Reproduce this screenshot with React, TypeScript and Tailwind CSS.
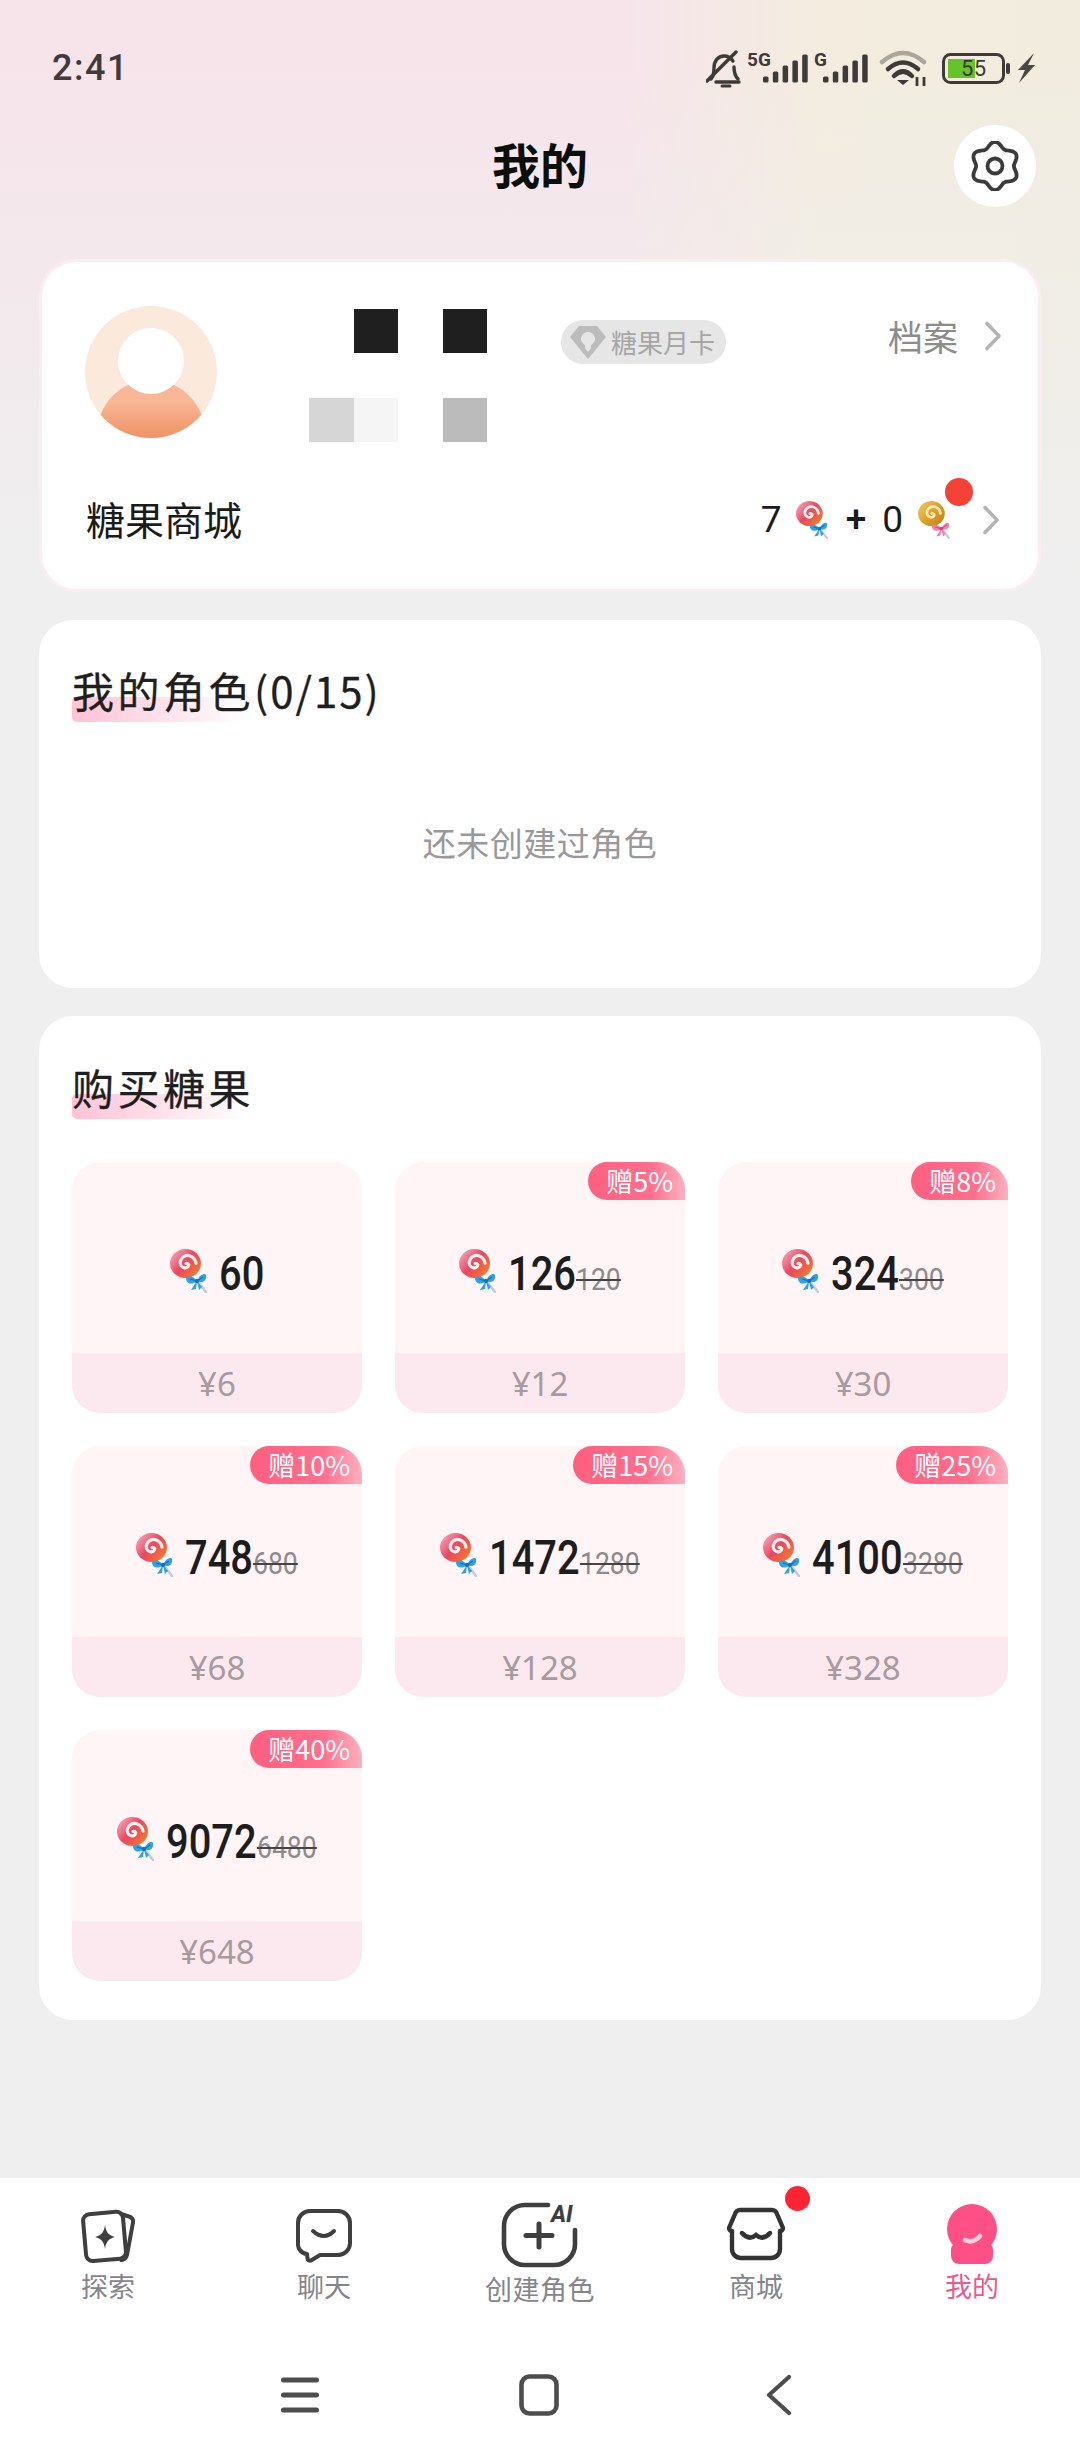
import React from 'react';

const cjk = "font-['Noto_Sans_CJK_SC','Noto_Sans',sans-serif]";
const roboto = "font-['Roboto',sans-serif]";

// scalloped outline for the settings gear
const gearPath = (() => {
    const pts: string[] = [];
    for (let i = 0; i < 120; i++) {
        const t = (i / 120) * Math.PI * 2;
        const r = 21.5 + 2.6 * Math.cos(6 * (t - Math.PI / 2));
        pts.push(`${(24 + r * Math.cos(t)).toFixed(2)} ${(25 + r * Math.sin(t)).toFixed(2)}`);
    }
    return 'M' + pts.join('L') + 'Z';
})();

const Chevron = () => (
    <svg width="18" height="30" viewBox="0 0 18 30" fill="none">
        <path d="M3 2.5 15 15 3 27.5" stroke="#b4b4b4" strokeWidth="3.6" strokeLinecap="round" strokeLinejoin="round" />
    </svg>
);

const Candy = ({ id, gold = false, w = 37, h = 44 }: { id: string; gold?: boolean; w?: number; h?: number }) => {
    const bow = gold ? '#f57fab' : '#2ba3ea';
    const bowDark = gold ? '#d8457e' : '#0f74c2';
    return (
        <svg width={w} height={h} viewBox="0 0 37 44" fill="none" className="shrink-0">
            <defs>
                <linearGradient id={id} x1="0.05" y1="0.1" x2="0.95" y2="0.8">
                    <stop offset="0" stopColor={gold ? '#efc560' : '#f9a6b8'} />
                    <stop offset="0.5" stopColor={gold ? '#dfa32b' : '#ea4660'} />
                    <stop offset="1" stopColor={gold ? '#c5851a' : '#f4792b'} />
                </linearGradient>
            </defs>
            <path d="M29 34 36 43" stroke="#c4c9e8" strokeWidth="2.6" strokeLinecap="round" />
            <ellipse cx="15.5" cy="14.500" rx="15.500" ry="14.500" fill={`url(#${id})`} />
            <path
                d="M16 14.500a2.200 2.200 0 0 1 2.800 1.500 3.800 3.800 0 0 1-4.600 2.800 5.600 5.600 0 0 1-3.800-6.800 7.600 7.600 0 0 1 9.200-5.300 9.500 9.500 0 0 1 6.400 7.500"
                stroke={gold ? '#fbe8b0' : '#fff0ec'}
                strokeWidth="3.200"
                strokeLinecap="round"
            />
            <path d="M27 32C23 26 18 27 16 29 16 34 21 37 27 32Z" fill={bow} />
            <path d="M27 32C30 25 35 24 36 26 37 31 33 35 27 32Z" fill={bow} />
            <path d="M27 32 21 41 26 40Z" fill={bow} />
            <path d="M27 32 29 41 32 38Z" fill={bow} />
            <path d="M20 30 27 32M33 28 27 32" stroke={bowDark} strokeWidth="1.200" />
            <circle cx="27" cy="32" r="2.200" fill={bowDark} />
        </svg>
    );
};

const StatusIcons = () => {
    const bars = (x: number) =>
        [6, 11, 17, 22, 28].map((bh, i) => (
            <rect key={i} x={x + i * 9.8} y={32.5 - bh} width="5.500" height={bh} rx="1.500" fill="#3d3a38" />
        ));
    return (
        <svg width="330" height="46" viewBox="0 -6 330 46" fill="none" className="-mt-[6px]">
            <path
                d="M5 29c3-3 3-6 3-11 0-7 4-12 10-12 4 0 7 2 9 5M28 17c0 5 1 9 4 12"
                stroke="#3d3a38"
                strokeWidth="3.400"
                strokeLinecap="round"
            />
            <path d="M1 31 30 2M10 32H33" stroke="#3d3a38" strokeWidth="3.400" strokeLinecap="round" />
            <path d="M16 36h8" stroke="#3d3a38" strokeWidth="3" strokeLinecap="round" />
            <text x="41" y="15.500" fontSize="19" fontWeight="700" fill="#3d3a38" fontFamily="Roboto, sans-serif">5G</text>
            {bars(57)}
            <text x="108" y="15.500" fontSize="19" fontWeight="700" fill="#3d3a38" fontFamily="Roboto, sans-serif">G</text>
            {bars(117)}
            <path d="M176 12Q197-6 218 12" stroke="#aaa69c" strokeWidth="4.500" strokeLinecap="round" />
            <path d="M182 19Q197 6 212 19M188 26Q197 17 206 26" stroke="#3d3a38" strokeWidth="4.500" strokeLinecap="round" />
            <path d="M191 30h12l-6 5Z" fill="#3d3a38" />
            <path d="M211 27v9M218 27v9" stroke="#3d3a38" strokeWidth="2.800" />
            <rect x="237.500" y="4.500" width="60" height="28" rx="7" stroke="#3d3a38" strokeWidth="3" />
            <rect x="242" y="9" width="27" height="19" fill="#66c32a" />
            <text x="255" y="26" fontSize="22" letterSpacing="0.5" fill="#3a3a36" fontFamily="Roboto, sans-serif">55</text>
            <rect x="300" y="13" width="4" height="11" rx="2" fill="#3d3a38" />
            <path d="M328 3 312 20h7l-6 13 16-18h-7Z" fill="#4a4743" />
        </svg>
    );
};

const ExploreIcon = () => (
    <svg width="55" height="56" viewBox="0 0 55 56" fill="none">
        <path d="M40 6 48 8.500a5 5 0 0 1 4 6L46 47a6 6 0 0 1-7 5" stroke="#3f3f3f" strokeWidth="4" strokeLinejoin="round" />
        <rect x="3.500" y="5" width="40" height="47" rx="6.500" transform="rotate(-5 23 28)" stroke="#3f3f3f" strokeWidth="4" />
        <path d="M24 17C25 24 27 27 34 29 27 31 25 34 24 41 23 34 21 31 14 29 21 27 23 24 24 17Z" fill="#3f3f3f" />
    </svg>
);

const ChatIcon = () => (
    <svg width="56" height="54" viewBox="0 0 56 54" fill="none">
        <path
            d="M14 2h28a12 12 0 0 1 12 12v20a12 12 0 0 1-12 12H24l-9 5.500a2.500 2.500 0 0 1-3.500-2L11 45a10 10 0 0 1-9-11V14A12 12 0 0 1 14 2Z"
            stroke="#3f3f3f"
            strokeWidth="4"
            strokeLinejoin="round"
        />
        <path d="M17 22Q28 32 38 22" stroke="#3f3f3f" strokeWidth="4" strokeLinecap="round" />
    </svg>
);

const CreateIcon = () => (
    <svg width="78" height="66" viewBox="0 0 78 66" fill="none">
        <path
            d="M47 3H24A21 21 0 0 0 3 24V42A21 21 0 0 0 24 63H53A21 21 0 0 0 74 42V28"
            stroke="#3f3f3f"
            strokeWidth="4.600"
            strokeLinecap="round"
        />
        <path d="M38 22V45M25 33.500H51" stroke="#3f3f3f" strokeWidth="5" strokeLinecap="round" />
        <text x="50" y="20" fontSize="23" fontWeight="800" fontStyle="italic" fill="#3f3f3f" fontFamily="Roboto, sans-serif">AI</text>
    </svg>
);

const ShopIcon = () => (
    <svg width="60" height="54" viewBox="0 0 60 54" fill="none">
        <path
            d="M14 3H46a5 5 0 0 1 5 4L57 21a3 3 0 0 1-3 3V42a9 9 0 0 1-9 9H15a9 9 0 0 1-9-9V24a3 3 0 0 1-3-3L9 7a5 5 0 0 1 5-4Z"
            stroke="#333"
            strokeWidth="4.400"
            strokeLinejoin="round"
        />
        <path d="M16 26Q23 34 30 28Q37 34 44 26" stroke="#333" strokeWidth="4.400" strokeLinecap="round" />
    </svg>
);

const MeIcon = () => (
    <svg width="50" height="60" viewBox="0 0 50 60" fill="none">
        <circle cx="25" cy="25" r="25" fill="#ff4f87" />
        <rect x="4" y="38" width="42" height="22" rx="8" fill="#ff4f87" />
        <path d="M18 36Q26 40 33 32" stroke="#ffd3e0" strokeWidth="4.500" strokeLinecap="round" />
    </svg>
);

const products = [
    { amount: '60', gift: '', price: '¥6' },
    { amount: '126', old: '120', gift: '赠5%', price: '¥12' },
    { amount: '324', old: '300', gift: '赠8%', price: '¥30' },
    { amount: '748', old: '680', gift: '赠10%', price: '¥68' },
    { amount: '1472', old: '1280', gift: '赠15%', price: '¥128' },
    { amount: '4100', old: '3280', gift: '赠25%', price: '¥328' },
    { amount: '9072', old: '6480', gift: '赠40%', price: '¥648' },
];

const tabs = [
    { label: '探索', icon: <ExploreIcon />, pad: 'pb-[4px]' },
    { label: '聊天', icon: <ChatIcon />, pad: 'pb-[5px]' },
    { label: '创建角色', icon: <CreateIcon />, pad: '' },
    { label: '商城', icon: <ShopIcon />, pad: 'pb-[7px]' },
    { label: '我的', icon: <MeIcon />, pad: 'pb-[4px]' },
];

const SectionTitle = ({ children }: { children: React.ReactNode }) => (
    <h2 className={`${cjk} relative isolate self-start text-[42px] leading-[48px] tracking-[3.5px] text-[#1f1f1f] [-webkit-text-stroke:0.3px_#1f1f1f]`}>
        <span className="absolute left-0 top-[31px] -z-10 w-[175px] h-[25px] rounded-[5px] bg-[linear-gradient(90deg,#ffc2d6,#ffffff)]" />
        {children}
    </h2>
);

const App = () => {
    return (
        <div className="flex flex-col w-[1080px] h-[2460px] bg-[#efefef] bg-no-repeat bg-[length:100%_580px] bg-[linear-gradient(180deg,rgba(239,239,239,0)_10%,#efefef_100%),linear-gradient(90deg,#f6e4ea_0%,#f6e4ea_58%,#f3ecdf_76%,#f2ecdf_100%)]">
            <div className="flex items-start justify-between h-[125px] pl-[52px] pr-[44px] pt-[50px]">
                <span className={`${roboto} text-[36px] font-medium leading-[36px] tracking-[1.5px] text-[#3f3b3b]`}>2:41</span>
                <StatusIcons />
            </div>

            <div className="relative flex items-center justify-center h-[82px]">
                <h1 className={`${cjk} mb-[6px] text-[48px] font-bold text-[#0b0f0c]`}>我的</h1>
                <button className="absolute right-[44px] top-0 flex items-center justify-center w-[82px] h-[82px] rounded-full bg-white">
                    <svg width="48" height="50" viewBox="0 0 48 50" fill="none">
                        <path d={gearPath} stroke="#3b3b3b" strokeWidth="3.800" strokeLinejoin="round" />
                        <circle cx="24" cy="25" r="7.500" stroke="#3b3b3b" strokeWidth="3.800" />
                    </svg>
                </button>
            </div>

            {/* profile */}
            <section className="flex flex-col mx-[39px] mt-[52px] h-[333px] rounded-[38px] border-[3px] border-[#fbeef1] bg-white">
                <div className="flex items-start pl-[43px] pr-[36px] pt-[44px]">
                    <div className="relative w-[132px] h-[132px] shrink-0 overflow-hidden rounded-full bg-[#fbe9dc]">
                        <div className="absolute left-[12px] top-[74px] w-[108px] h-[108px] rounded-full bg-[linear-gradient(180deg,#f9b796_20%,#ef8a5b_60%)]" />
                        <div className="absolute left-[33px] top-[22px] w-[66px] h-[66px] rounded-full bg-white" />
                    </div>
                    <div className="grid grid-cols-4 grid-rows-3 w-[178px] h-[133px] ml-[92px] mt-[3px] shrink-0">
                        <div />
                        <div className="bg-[#1f1f1f]" />
                        <div />
                        <div className="bg-[#1f1f1f]" />
                        <div className="col-span-4" />
                        <div className="bg-[#d6d6d6]" />
                        <div className="bg-[#f5f5f5]" />
                        <div />
                        <div className="bg-[#bbbbbb]" />
                    </div>
                    <div className="flex items-center gap-[5px] w-[165px] h-[44px] ml-[74px] mt-[14px] pl-[9px] rounded-full bg-[#e6e6e6]">
                        <svg width="36" height="34" viewBox="0 0 36 34" fill="none" className="shrink-0">
                            <path d="M9 1H27L36 12 18 34 0 12Z" fill="#bcbcbc" />
                            <path d="M18 7a7 7 0 0 1 7 7c0 3-2 5-4 6v3l-3 4-3-4v-3c-2-1-4-3-4-6a7 7 0 0 1 7-7Z" fill="#e6e6e6" />
                        </svg>
                        <span className={`${cjk} text-[26px] leading-none text-[#a6a6a6]`}>糖果月卡</span>
                    </div>
                    <div className="flex items-center gap-[26px] ml-auto mt-[8px]">
                        <span className={`${cjk} text-[35px] leading-[44px] text-[#8c8c8c]`}>档案</span>
                        <Chevron />
                    </div>
                </div>
                <div className="flex items-center mt-[46px] h-[60px] pl-[44px] pr-[38px]">
                    <span className={`${cjk} text-[39px] text-[#1b1b1b]`}>糖果商城</span>
                    <div className={`${roboto} flex items-center ml-auto mt-[4px] text-[37px] text-[#1b1b1b]`}>
                        <span>7</span>
                        <span className="ml-[14px] flex"><Candy id="candy-top" w={32} h={38} /></span>
                        <span className="ml-[18px] font-medium">+</span>
                        <span className="ml-[16px]">0</span>
                        <span className="relative ml-[15px] flex">
                            <Candy id="candy-gold" gold w={32} h={38} />
                            <span className="absolute left-[27px] top-[-23px] w-[28px] h-[28px] rounded-full bg-[#f44336]" />
                        </span>
                        <span className="ml-[32px] flex"><Chevron /></span>
                    </div>
                </div>
            </section>

            {/* my characters */}
            <section className="flex flex-col mx-[39px] mt-[28px] h-[368px] rounded-[34px] bg-white pt-[46px] pl-[33px]">
                <SectionTitle>
                    我的角色<span className="tracking-[2px]">(0/15)</span>
                </SectionTitle>
                <p className={`${cjk} mt-[106px] pr-[33px] text-center text-[33px] leading-[44px] tracking-[0.5px] text-[#999999]`}>还未创建过角色</p>
            </section>

            {/* buy candy */}
            <section className="flex flex-col mx-[39px] mt-[28px] rounded-[34px] bg-white pt-[47px] px-[33px] pb-[39px]">
                <SectionTitle>购买糖果</SectionTitle>
                <div className="grid grid-cols-3 gap-x-[33px] gap-y-[33px] mt-[51px]">
                    {products.map((p, index) => (
                        <div key={p.amount} className="relative flex flex-col h-[251px] overflow-hidden rounded-[28px] bg-[#fff4f6]">
                            {p.gift && (
                                <span
                                    className={`${cjk} absolute right-0 top-0 h-[38px] pl-[18px] pr-[12px] rounded-l-full text-[27px] leading-[38px] text-white bg-[linear-gradient(90deg,#ff5f80_0%,#ff6f8d_65%,#ffb0bf_100%)]`}
                                >
                                    {p.gift}
                                </span>
                            )}
                            <div className="flex flex-1 justify-center items-start pt-[87px]">
                                <Candy id={`candy-${index}`} />
                                <span className="block ml-[12px] mt-[1px]" style={{ width: p.amount.length * 22.5 }}>
                                    <span className={`${roboto} inline-block origin-left scale-x-[0.83] text-[48px] font-medium leading-none text-[#1d1d1d]`}>{p.amount}</span>
                                </span>
                                {p.old && (
                                    <span className="block mt-[14px] ml-[1px]" style={{ width: p.old.length * 15 }}>
                                        <span className={`${roboto} inline-block origin-left scale-x-[0.83] text-[32px] leading-none text-[#8f8a8c] line-through decoration-[#444444] decoration-2`}>{p.old}</span>
                                    </span>
                                )}
                            </div>
                            <div className="flex items-center justify-center h-[60px] pt-[2px] bg-[#fce9ef] font-['Noto_Sans',sans-serif] text-[33px] text-[#a89a9f]">
                                {p.price}
                            </div>
                        </div>
                    ))}
                </div>
            </section>

            {/* bottom bar */}
            <nav className="flex flex-col mt-auto h-[282px] bg-white">
                <div className="grid grid-cols-5 pt-[25px]">
                    {tabs.map((tab, index) => (
                        <div key={tab.label} className="flex flex-col items-center">
                            <div className={`relative flex items-end justify-center h-[65px] ${tab.pad}`}>
                                {tab.icon}
                                {index === 3 && <span className="absolute right-[-24px] top-[-17px] w-[25px] h-[25px] rounded-full bg-[#ff2433]" />}
                            </div>
                            <span
                                className={`${cjk} text-[27px] leading-[35px] ${
                                    index === 4 ? 'text-[#ec5a8c]' : 'text-[#85858b]'
                                } ${index === 2 ? 'mt-[3px] tracking-[0.5px]' : ''}`}
                            >
                                {tab.label}
                            </span>
                        </div>
                    ))}
                </div>
                <div className="flex items-center justify-center pr-[8px] mt-auto mb-[43px] h-[44px]">
                    <svg width="38" height="36" viewBox="0 0 38 36" fill="none">
                        <path d="M2.500 3H35.500M2.500 18H35.500M2.500 33H35.500" stroke="#4d4d4d" strokeWidth="5" strokeLinecap="round" />
                    </svg>
                    <svg width="40" height="42" viewBox="0 0 40 42" fill="none" className="ml-[200px]">
                        <rect x="2.500" y="2.500" width="35" height="37" rx="8" stroke="#4d4d4d" strokeWidth="4.600" />
                    </svg>
                    <svg width="26" height="42" viewBox="0 0 26 42" fill="none" className="ml-[207px]">
                        <path d="M23 3 3 21 23 39" stroke="#4d4d4d" strokeWidth="4.200" strokeLinecap="round" strokeLinejoin="round" />
                    </svg>
                </div>
            </nav>
        </div>
    );
};

export default App;
